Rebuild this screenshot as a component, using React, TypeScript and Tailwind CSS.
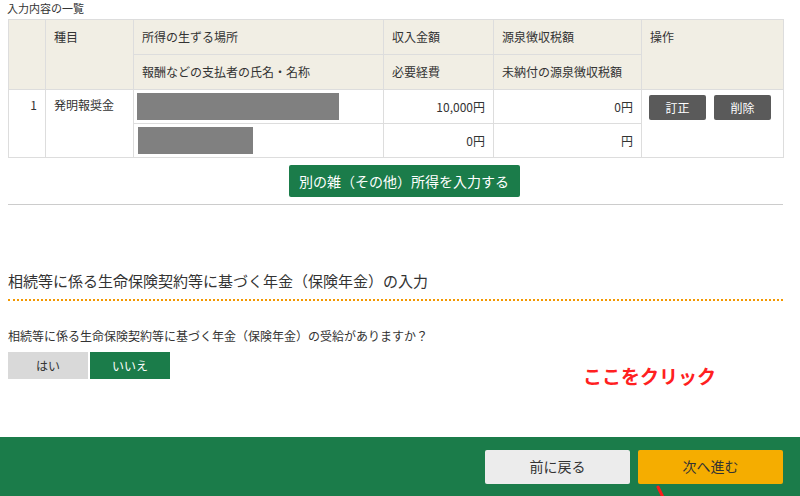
export default function App() {
  const th = "border border-[#ddd] bg-[#f1eee4] text-left align-top font-normal px-[8px] py-[9px]";
  const td = "border border-[#ddd] px-[8px] py-[7px]";
  return (
    <div className="w-[800px] h-[496px] bg-white text-[#333] text-[12px] flex flex-col overflow-hidden" style={{ fontFamily: '"Noto Sans CJK JP", "Noto Sans", sans-serif' }}>
      <div className="flex-1 px-[8px] relative">
        <div className="h-[19px] leading-[17px] text-[11px] -ml-[1px]">入力内容の一覧</div>
        <table className="w-[775px] border-collapse table-fixed leading-[16px]">
          <colgroup>
            <col className="w-[37px]" /><col className="w-[88px]" /><col className="w-[250px]" /><col className="w-[110px]" /><col className="w-[148px]" /><col className="w-[142px]" />
          </colgroup>
          <thead>
            <tr className="h-[34px]">
              <th rowSpan={2} className={th}></th>
              <th rowSpan={2} className={th}>種目</th>
              <th className={th}>所得の生ずる場所</th>
              <th className={th}>収入金額</th>
              <th className={th}>源泉徴収税額</th>
              <th rowSpan={2} className={th}>操作</th>
            </tr>
            <tr className="h-[35px]">
              <th className={th}>報酬などの支払者の氏名・名称</th>
              <th className={th}>必要経費</th>
              <th className={th}>未納付の源泉徴収税額</th>
            </tr>
          </thead>
          <tbody>
            <tr className="h-[34px]">
              <td rowSpan={2} className={td + " text-right align-top"}>1</td>
              <td rowSpan={2} className={td + " align-top"}>発明報奨金</td>
              <td className="border border-[#ddd] px-[3px] py-[3px]"><div className="w-[202px] h-[27px] bg-[#808080]" /></td>
              <td className={td + " text-right"}>10,000円</td>
              <td className={td + " text-right"}>0円</td>
              <td rowSpan={2} className="border border-[#ddd] px-[7px] py-[5px] align-top">
                <div className="flex gap-[8px]">
                  <span className="w-[57px] h-[25px] bg-[#5a5a5a] text-white flex items-center justify-center rounded-[2px]">訂正</span>
                  <span className="w-[57px] h-[25px] bg-[#5a5a5a] text-white flex items-center justify-center rounded-[2px]">削除</span>
                </div>
              </td>
            </tr>
            <tr className="h-[34px]">
              <td className="border border-[#ddd] px-[4px] py-[1px]"><div className="w-[115px] h-[27px] bg-[#808080]" /></td>
              <td className={td + " text-right"}>0円</td>
              <td className={td + " text-right"}>円</td>
            </tr>
          </tbody>
        </table>
        <div className="flex justify-center mt-[7px] pl-[8px]">
          <div className="w-[231px] h-[32px] bg-[#1b7c4a] text-white text-[14px] flex items-center justify-center rounded-[2px]">別の雑（その他）所得を入力する</div>
        </div>
        <div className="border-t border-[#ccc] mt-[7px] w-[775px]" />
        <div className="mt-[66px] text-[15px] leading-[20px] text-[#333]">相続等に係る生命保険契約等に基づく年金（保険年金）の入力</div>
        <div className="mt-[8px] border-t-2 border-dotted border-[#f39800] w-[775px]" />
        <div className="mt-[27px] leading-[16px]">相続等に係る生命保険契約等に基づく年金（保険年金）の受給がありますか？</div>
        <div className="flex gap-[2px] mt-[8px]">
          <div className="w-[80px] h-[27px] bg-[#d9d9d9] flex items-center justify-center">はい</div>
          <div className="w-[80px] h-[27px] bg-[#1b7c4a] text-white flex items-center justify-center">いいえ</div>
        </div>
        <div className="absolute left-[583px] top-[364px] text-[#ff2020] text-[19px] font-bold leading-[24px]">ここをクリック</div>
      </div>
      <div className="h-[59px] bg-[#1b7c4a] flex items-center justify-end gap-[8px] pr-[17px] relative">
        <div className="w-[145px] h-[34px] bg-[#ececec] rounded-[2px] flex items-center justify-center text-[14px] text-[#333]">前に戻る</div>
        <div className="w-[145px] h-[34px] bg-[#f5ad00] rounded-[2px] flex items-center justify-center text-[14px] text-[#333]">次へ進む</div>
        <svg className="absolute left-0 top-[-59px]" width="800" height="118" viewBox="0 0 800 118">
          <g stroke="#ff1a1a" strokeWidth="3" strokeLinecap="round" fill="none">
            <line x1="658" y1="109" x2="688" y2="171" />
            <line x1="688" y1="171" x2="663" y2="162" />
            <line x1="688" y1="171" x2="688" y2="152" />
          </g>
        </svg>
      </div>
    </div>
  );
}
